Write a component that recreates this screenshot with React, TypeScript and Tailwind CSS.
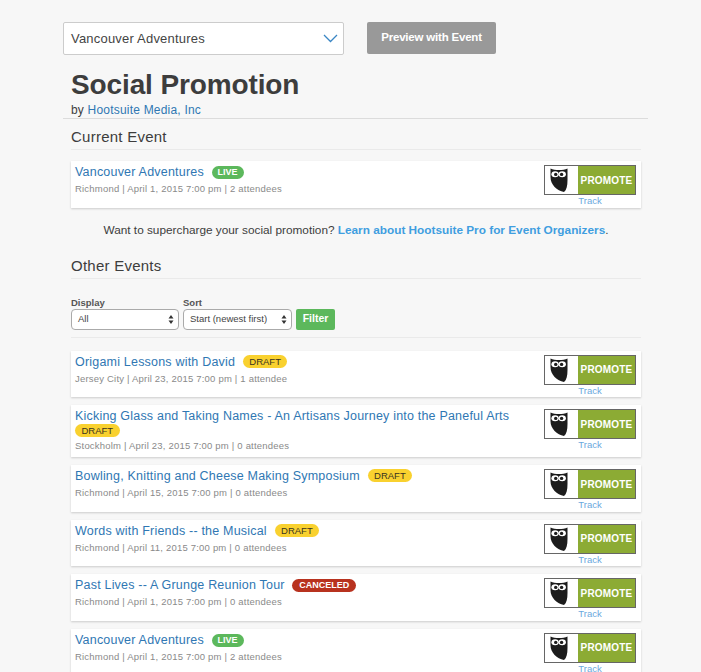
import React from "react";

const font = { fontFamily: '"Liberation Sans", Arial, sans-serif' };

function Owl() {
  return (
    <svg width="30" height="28" viewBox="0 0 30 28" className="block">
      <path d="M3.5 2.5 C8 4.6 16 4.6 20.5 2.5 L20.5 14 C20.5 20 19.5 24 17 26 C10 24.5 3.5 19 3.5 11 Z" fill="#1c1c1c" />
      <ellipse cx="8.1" cy="8.2" rx="3.7" ry="3" fill="#fff" />
      <ellipse cx="15.2" cy="8.2" rx="3.7" ry="3" fill="#fff" />
      <circle cx="8.7" cy="8.4" r="1.7" fill="#1c1c1c" />
      <circle cx="14.6" cy="8.4" r="1.7" fill="#1c1c1c" />
    </svg>
  );
}

function Promote() {
  return (
    <div className="flex flex-col items-center w-[92px] shrink-0">
      <div className="flex w-[92px] h-[30px] border border-[#666] bg-white">
        <div className="w-[33px] flex items-center justify-center"><Owl /></div>
        <div className="flex-1 bg-[#8cab34] text-white text-[10px] font-bold tracking-[0.2px] flex items-center justify-center">PROMOTE</div>
      </div>
      <a className="text-[9.5px] leading-[11px] text-[#6aa8dd]">Track</a>
    </div>
  );
}

function Badge({ kind, wrap }: { kind: string; wrap?: boolean }) {
  const cls =
    kind === "DRAFT"
      ? "bg-[#f9d12f] text-[#3a3320] px-[6.5px] font-normal text-[9.5px]"
      : kind === "LIVE"
      ? "bg-[#5cb85c] text-white px-[6px] font-bold text-[9px]"
      : "bg-[#b8321f] text-white px-[7px] font-bold text-[9px]";
  return (
    <span className={`inline-block align-[1px] h-[13px] leading-[13px] rounded-full tracking-normal ${wrap ? "" : "ml-[4px]"} ${cls}`}>{kind}</span>
  );
}

function Card({ title, badge, meta, wrap, last }: { title: string; badge: string; meta: string; wrap?: boolean; last?: boolean }) {
  return (
    <div className={`flex items-start justify-between bg-white shadow-[0_1px_2px_rgba(0,0,0,0.18)] pl-[4px] pr-[5px] pt-[4px] ${wrap ? "h-[52px]" : "h-[46.5px]"} ${last ? "" : "mb-2"}`}>
      <div className="pt-0">
        <div className="text-[12.5px] leading-[15px] text-[#2f77b3] tracking-[0.2px]">
          {title}
          {wrap ? <br /> : " "}
          <Badge kind={badge} wrap={wrap} />
        </div>
        <div className={`text-[9.5px] leading-[12px] text-[#8a8a8a] tracking-[0.2px] ${wrap ? "mt-[1px]" : "mt-[3px]"}`}>{meta}</div>
      </div>
      <Promote />
    </div>
  );
}

const events = [
  { title: "Origami Lessons with David", badge: "DRAFT", meta: "Jersey City | April 23, 2015 7:00 pm | 1 attendee" },
  { title: "Kicking Glass and Taking Names - An Artisans Journey into the Paneful Arts", badge: "DRAFT", meta: "Stockholm | April 23, 2015 7:00 pm | 0 attendees", wrap: true },
  { title: "Bowling, Knitting and Cheese Making Symposium", badge: "DRAFT", meta: "Richmond | April 15, 2015 7:00 pm | 0 attendees" },
  { title: "Words with Friends -- the Musical", badge: "DRAFT", meta: "Richmond | April 11, 2015 7:00 pm | 0 attendees" },
  { title: "Past Lives -- A Grunge Reunion Tour", badge: "CANCELED", meta: "Richmond | April 1, 2015 7:00 pm | 0 attendees" },
  { title: "Vancouver Adventures", badge: "LIVE", meta: "Richmond | April 1, 2015 7:00 pm | 2 attendees" },
];

function SmallSelect({ label, value, w }: { label: string; value: string; w: string }) {
  return (
    <div className={w}>
      <div className="text-[9.5px] leading-[12px] font-bold text-[#555]">{label}</div>
      <div className="flex items-center justify-between h-[21px] border border-[#aaa] rounded-[4px] bg-white pl-[6px] pr-[4px] text-[9.5px] text-[#444]">
        <span>{value}</span>
        <svg width="6" height="9" viewBox="0 0 6 9"><path d="M3 0 L5.5 3.4 H0.5 Z M3 9 L5.5 5.6 H0.5 Z" fill="#333" /></svg>
      </div>
    </div>
  );
}

export default function App() {
  return (
    <div style={font} className="h-[672px] overflow-hidden bg-[#f7f7f7] text-[#3d3d3d]">
      <div className="flex items-start pl-[63px] pt-[22px]">
        <div className="flex items-center justify-between w-[281px] h-[33px] bg-white border border-[#ccc] rounded-[2px] pl-[7px] pr-[5px] text-[13px] tracking-[0.2px] text-[#444]">
          <span>Vancouver Adventures</span>
          <svg width="15" height="9" viewBox="0 0 15 9"><path d="M1 1 L7.5 7.5 L14 1" fill="none" stroke="#3a86c4" strokeWidth="1.3" /></svg>
        </div>
        <div className="ml-[23px] w-[129px] h-[32px] bg-[#999] rounded-[2px] text-white text-[11.5px] tracking-[-0.2px] font-bold flex items-center justify-center">Preview with Event</div>
      </div>

      <div className="pl-[63px] w-[648px]">
        <h1 className="pl-[8px] text-[28px] leading-[30px] tracking-[-0.12px] font-bold text-[#3d3d3d] mt-[15px]">Social Promotion</h1>
        <div className="pl-[8px] text-[12px] leading-[14px] tracking-[0.2px] mt-[3px] pb-[1px]">by <a className="text-[#2f77b3]">Hootsuite Media, Inc</a></div>
        <div className="border-t border-[#dcdcdc]" />

        <div className="pl-[8px] pr-[7px]">
          <h2 className="text-[15px] leading-[18px] tracking-[0.25px] mt-[9px] pb-[3px] border-b border-[#eaeaea] font-normal">Current Event</h2>

          <div className="mt-[11px]">
            <Card title="Vancouver Adventures" badge="LIVE" meta="Richmond | April 1, 2015 7:00 pm | 2 attendees" last />
          </div>

          <div className="text-center text-[11.8px] leading-[14px] mt-[15px]">
            Want to supercharge your social promotion? <a className="font-bold text-[#3f9ee0]">Learn about Hootsuite Pro for Event Organizers</a>.
          </div>

          <h2 className="text-[15px] leading-[18px] tracking-[0.25px] mt-[20px] pb-[3px] border-b border-[#eaeaea] font-normal">Other Events</h2>

          <div className="flex items-end mt-[18px] pb-[7px] border-b border-[#eaeaea]">
            <SmallSelect label="Display" value="All" w="w-[108px] mr-[4px]" />
            <SmallSelect label="Sort" value="Start (newest first)" w="w-[109px]" />
            <div className="ml-[4px] w-[39px] h-[21px] bg-[#5cb85c] rounded-[2px] text-white text-[10.5px] font-bold flex items-center justify-center">Filter</div>
          </div>

          <div className="mt-[13px]">
            {events.map((e) => (
              <Card key={e.title} {...e} />
            ))}
          </div>
        </div>
      </div>
    </div>
  );
}
